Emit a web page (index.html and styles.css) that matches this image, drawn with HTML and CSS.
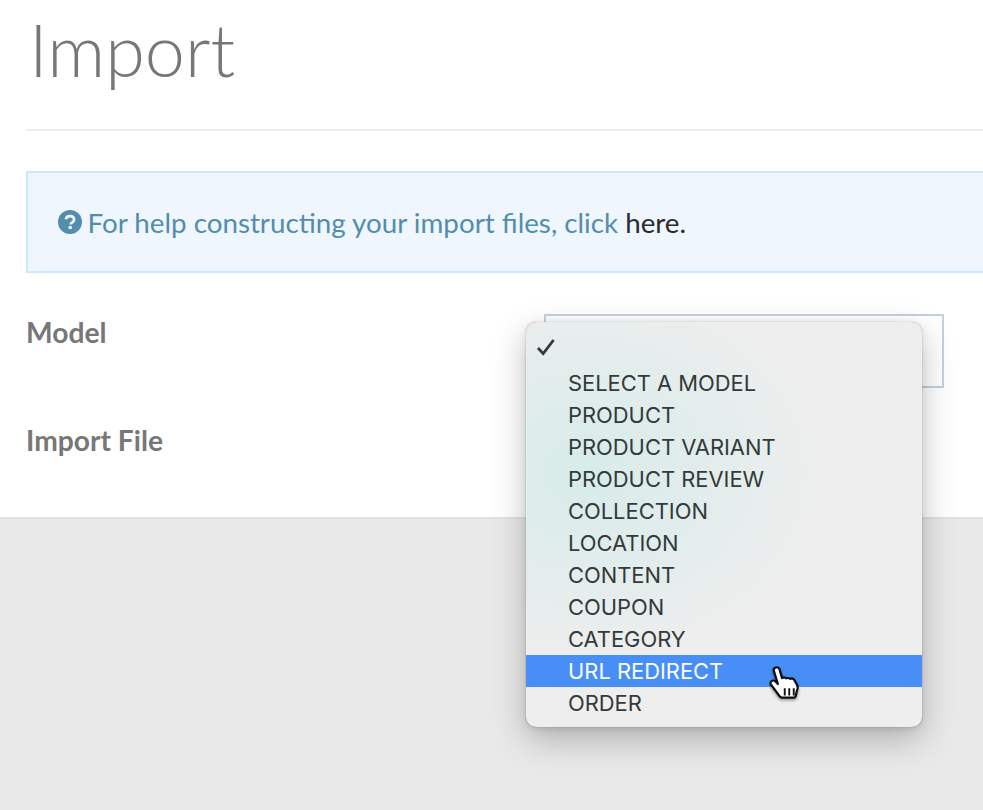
FILE: index.html
```html
<!DOCTYPE html>
<html lang="en">
<head>
<meta charset="utf-8">
<title>Import</title>
<link rel="stylesheet" href="styles.css">
</head>
<body>
<main class="panel">
  <h1 class="title">Import</h1>
  <hr class="rule">
  <div class="alert">
    <svg class="help-icon" viewBox="0 0 24 24" width="24" height="24" aria-hidden="true">
      <circle cx="12" cy="12" r="12" fill="#528eab"/>
      <path d="M7.9 9.4C8.2 7.3 9.8 6.2 12 6.2c2.4 0 4.1 1.4 4.1 3.4 0 1.6-.9 2.4-2.1 3.1-.9.5-1.2.9-1.2 1.8" fill="none" stroke="#eef5fe" stroke-width="2.7"/>
      <rect x="10.6" y="16" width="3.2" height="3" fill="#eef5fe"/>
    </svg>
    <span class="alert-text">For help constructing your import files, click <a class="alert-link" href="#">here.</a></span>
  </div>
  <div class="form">
    <label class="label">Model</label>
    <div class="select"></div>
    <label class="label">Import File</label>
    <div class="file"></div>
  </div>
</main>
<div class="menu">
  <svg class="check" viewBox="0 0 20 18" width="20" height="18" aria-hidden="true">
    <path d="M2 10l5.2 5.6L17.6 2" fill="none" stroke="#333a3a" stroke-width="2.8"/>
  </svg>
  <ul class="options">
    <li class="option">SELECT A MODEL</li>
    <li class="option">PRODUCT</li>
    <li class="option">PRODUCT VARIANT</li>
    <li class="option">PRODUCT REVIEW</li>
    <li class="option">COLLECTION</li>
    <li class="option">LOCATION</li>
    <li class="option">CONTENT</li>
    <li class="option">COUPON</li>
    <li class="option">CATEGORY</li>
    <li class="option active">URL REDIRECT</li>
    <li class="option">ORDER</li>
  </ul>
</div>
<svg class="cursor" viewBox="0 0 32 36" width="36" height="38" preserveAspectRatio="none" aria-hidden="true">
  <defs>
    <filter id="cursor-shadow" x="-30%" y="-30%" width="160%" height="160%">
      <feDropShadow dx="0" dy="1.5" stdDeviation="1.3" flood-color="#000" flood-opacity=".4"/>
    </filter>
  </defs>
  <path filter="url(#cursor-shadow)" d="M6 1.500c1.600-.6 3 .3 3.400 1.800l2.200 8.200c1.200-.9 2.800-.8 3.700.3 1.100-.8 2.700-.6 3.500.5 1.200-.7 2.700-.4 3.400.6l2.800 5.200c.8 1.700.7 3.500-.2 5.300l-1.100 5.300c-.2.900-.8 1.300-1.600 1.300H11.500c-.9 0-1.500-.4-2-1.200L1.800 17.600c-.9-1.400-.5-2.900.7-3.500 1.200-.7 2.600-.2 3.500.8l1.900 2.100L4.300 4.600C3.900 3.200 4.600 2 6 1.500z" fill="#fff" stroke="#111" stroke-width="2" stroke-linejoin="round"/>
  <path d="M14 21v7M18 21v7M22 21v7" stroke="#111" stroke-width="1.700" fill="none"/>
</svg>
</body>
</html>
```
FILE: styles.css
```css
* { box-sizing: border-box; }
html, body { margin: 0; height: 100%; overflow: hidden; }
body {
  background: #e9e9e9;
  font-family: Lato, "Open Sans", sans-serif;
  position: relative;
}
.panel {
  height: 519px;
  background: #fff;
  border-bottom: 2px solid #e2e2e2;
  padding: 0 0 0 26px;
  overflow: hidden;
}
.title {
  margin: 0;
  height: 129px;
  padding: 6px 0 0 3px;
  font-size: 72px;
  line-height: 86px;
  font-weight: 300;
  color: #777;
}
.rule {
  margin: 0;
  border: 0;
  height: 2px;
  background: #eee;
}
.alert {
  margin: 40px -10px 0 0;
  height: 102px;
  border: 2px solid #cbe8fd;
  background: #eff6fe;
  padding: 0 0 0 30px;
  display: flex;
  align-items: center;
  gap: 5.5px;
  font-size: 27.75px;
  color: #528eab;
}
.help-icon { flex: none; }
.alert-link { color: #2b2b2b; text-decoration: none; }
.form {
  margin-top: 41px;
  display: grid;
  grid-template-columns: 518px 400px;
  grid-auto-rows: min-content;
  row-gap: 34px;
  align-items: start;
}
.label {
  font-size: 28.2px;
  line-height: 36px;
  font-weight: 700;
  color: #777;
}
.select {
  height: 74px;
  border: 2px solid #c4d1de;
}
.file { height: 38px; }
.menu {
  position: absolute;
  left: 526px;
  top: 322px;
  width: 396px;
  height: 405px;
  padding: 45px 0 0;
  border-radius: 10px;
  background:
    radial-gradient(ellipse 240px 190px at 60px 150px, #d7ecea 0%, rgba(215,236,234,.55) 50%, rgba(215,236,234,0) 100%),
    #eeeeee;
  box-shadow: 0 0 1px rgba(0,0,0,.45), 0 12px 34px rgba(0,0,0,.26), 0 2px 6px rgba(0,0,0,.1);
  font-family: Inter, "Liberation Sans", sans-serif;
  overflow: hidden;
}
.check {
  position: absolute;
  left: 10px;
  top: 16px;
}
.options {
  list-style: none;
  margin: 0;
  padding: 0;
}
.option {
  height: 32px;
  line-height: 32px;
  padding-left: 42px;
  font-size: 21.9px;
  color: #333a3a;
}
.active {
  background: #478ef7;
  color: #fff;
}
.cursor {
  position: absolute;
  left: 769px;
  top: 666px;
}
```
